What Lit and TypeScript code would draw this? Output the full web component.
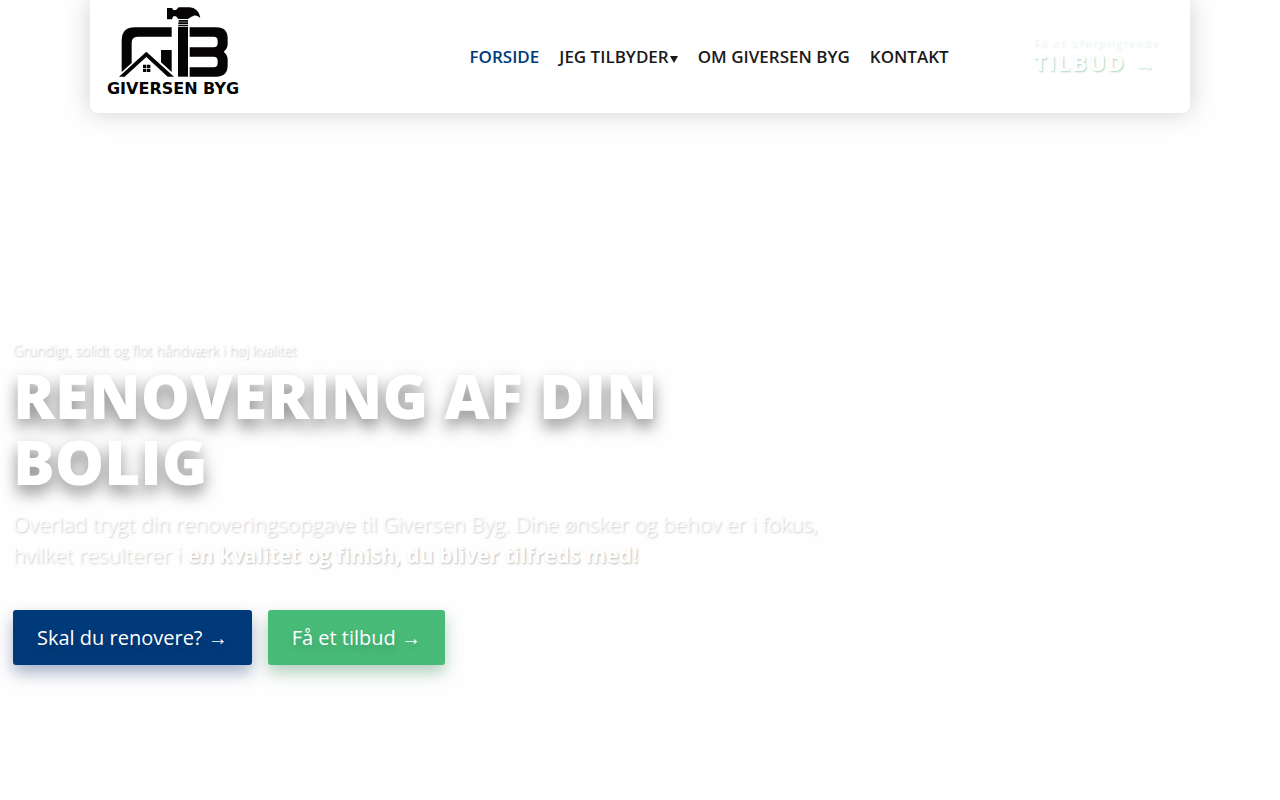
import { LitElement, html, css } from "lit";
import { customElement } from "lit/decorators.js";

@customElement("giversen-logo")
class GiversenLogo extends LitElement {
  static styles = css`
    :host { display: block; }
    svg { display: block; width: 134px; height: 92px; }
    .word { font-family: "DejaVu Sans", sans-serif; font-weight: 700; font-size: 48px; fill: #050303; }
  `;
  render() {
    return html`
      <svg viewBox="80 21 402 276" role="img" aria-label="Giversen Byg">
        <g fill="#050303">
          <path d="M274 82H164Q124 82 124 122V216L154 189V128Q154 110 172 110H274Z" />
          <path d="M242 150H274V216L242 187Z" />
          <path d="M116 230L198 155L281 230H262L198 171L133 230Z" />
          <path d="M188 194H198V204H188ZM200 194H210V204H200ZM188 206H198V216H188ZM200 206H210V216H200Z" />
          <path d="M260 24H275L279 30H287L295 22H325C345 22 357 34 360 55C351 44 342 44 332 51L323 57H294L287 49H279L275 58H260Z" />
          <path d="M295 60H323V65H295ZM294 67H323V72H294ZM294 74H323V79H294Z" />
          <path d="M293 81H323V230H293Z" />
          <path d="M328 82H408Q442 82 442 116V132Q442 146 430 155Q442 164 442 180V196Q442 230 408 230H328V202H400Q412 202 412 190V182Q412 170 400 170H328V142H400Q412 142 412 130V122Q412 110 400 110H328Z" />
        </g>
        <text class="word" x="80" y="282">GIVERSEN BYG</text>
      </svg>
    `;
  }
}

@customElement("app-root")
class AppRoot extends LitElement {
  static styles = css`
    :host {
      display: block;
      min-height: 100vh;
      background: #fefefe;
      color: #fff;
      font-family: "Open Sans", "Noto Sans", sans-serif;
    }
    * { box-sizing: border-box; }
    a { color: inherit; text-decoration: none; }
    .page { display: flex; flex-direction: column; min-height: 100vh; }
    .header {
      width: calc(100% - 32px);
      max-width: 1100px;
      height: 113px;
      margin: 0 auto;
      padding: 0 30px 0 17px;
      display: flex;
      align-items: center;
      background: #fff;
      border-radius: 0 0 8px 8px;
      box-shadow: 0 0 24px rgba(0, 0, 0, 0.18);
    }
    .logo { margin-right: auto; padding-bottom: 8px; }
    .nav { display: flex; gap: 20px; margin-right: 85px; font-size: 17px; line-height: 24px; font-weight: 600; color: #1a1a1a; }
    .active { color: #003a7a; }
    .caret { display: inline-block; border: 4px solid transparent; border-top: 7px solid #1a1a1a; border-bottom: 0; margin-left: 1px; }
    .offer { display: flex; flex-direction: column; padding-bottom: 4px; text-shadow: 1px 1px 2px rgba(40, 150, 100, 0.4); }
    .small { font-size: 10px; line-height: 14px; font-weight: 400; letter-spacing: 2px; text-shadow: 1px 1px 2px rgba(40, 150, 100, 0.2); }
    .big { font-size: 22px; line-height: 24px; font-weight: 700; letter-spacing: 2px; }
    .hero { flex: 1; display: flex; flex-direction: column; padding: 226px 13px 32px; }
    .lead { margin: 0; font-size: 14px; line-height: 23px; font-weight: 300; text-shadow: 1px 1px 2px rgba(0, 0, 0, 0.3); }
    h1 { margin: 0; max-width: 760px; font-size: 62px; line-height: 66px; font-weight: 800; text-transform: uppercase; text-shadow: 0 8px 16px rgba(0, 0, 0, 0.45); }
    .text { margin: 15px 0 0; max-width: 860px; font-size: 21px; line-height: 31px; font-weight: 300; text-shadow: 1px 1px 2px rgba(0, 0, 0, 0.25); }
    .text strong { font-weight: 700; }
    .line { display: block; }
    .actions { display: flex; gap: 16px; margin-top: 39px; }
    .button { height: 55px; padding: 0 24px; display: flex; align-items: center; border-radius: 3px; font-size: 20px; line-height: 30px; white-space: pre; text-shadow: 0 4px 8px rgba(0, 0, 0, 0.2); }
    .blue { background: #003a7a; box-shadow: 0 8px 16px rgba(0, 40, 100, 0.35); }
    .green { background: #48bb78; box-shadow: 0 8px 16px rgba(40, 120, 75, 0.35); }
  `;
  render() {
    return html`
      <div class="page">
        <header class="header">
          <a class="logo" href="#"><giversen-logo></giversen-logo></a>
          <nav class="nav">
            <a class="active" href="#">FORSIDE</a>
            <a href="#tilbyder">JEG TILBYDER<span class="caret"></span></a>
            <a href="#om">OM GIVERSEN BYG</a>
            <a href="#kontakt">KONTAKT</a>
          </nav>
          <a class="offer" href="#tilbud"><span class="small">Få et uforpligtende</span><span class="big">TILBUD →</span></a>
        </header>
        <main class="hero">
          <p class="lead">Grundigt, solidt og flot håndværk i høj kvalitet</p>
          <h1><span class="line">Renovering af din</span><span class="line">bolig</span></h1>
          <p class="text">
            <span class="line">Overlad trygt din renoveringsopgave til Giversen Byg. Dine ønsker og behov er i fokus,</span>
            <span class="line">hvilket resulterer i <strong>en kvalitet og finish, du bliver tilfreds med!</strong></span>
          </p>
          <div class="actions">
            <a class="button blue" href="#renovere">Skal du renovere? →</a>
            <a class="button green" href="#tilbud">Få et tilbud →</a>
          </div>
        </main>
      </div>
    `;
  }
}
